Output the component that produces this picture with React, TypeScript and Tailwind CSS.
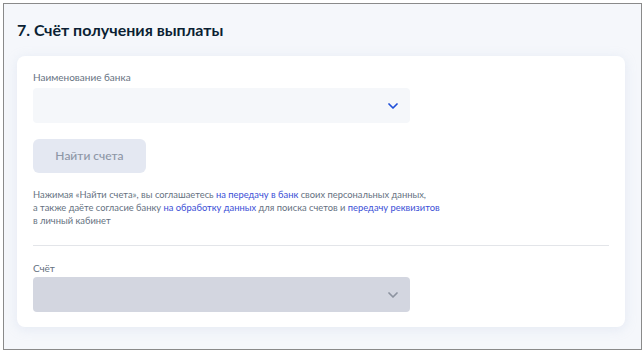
import React from 'react';

function Chevron({ color }: { color: string }) {
  return (
    <svg width="10" height="6" viewBox="0 0 10 6" fill="none">
      <path d="M1 1l4 4 4-4" stroke={color} strokeWidth="1.7" strokeLinecap="round" strokeLinejoin="round" />
    </svg>
  );
}

export default function App() {
  return (
    <div className="w-[644px] h-[352px] bg-white pt-[3px] pl-[3px]" style={{ fontFamily: 'Lato, "Noto Sans", sans-serif' }}>
      <div className="w-[639px] h-[347px] border border-[#8a8a8a] bg-[#f5f7fb] pl-[13px] pr-[16px] pt-[14px]">
        <h2 className="text-[16px] leading-[24px] font-bold text-[#0b1f33]">7. Счёт получения выплаты</h2>

        <div className="mt-[14px] bg-white rounded-[8px] px-[16px] pt-[14px] pb-[15px] shadow-[0_2px_12px_rgba(180,195,225,0.25)]">
          {/* Bank */}
          <label className="block text-[10px] leading-[14px] text-[#66727f] mb-[4px]">Наименование банка</label>
          <div className="w-[377px] h-[35px] rounded-[4px] bg-[#f5f7fa] flex items-center justify-end pr-[12px]">
            <Chevron color="#1f4fd8" />
          </div>

          <button className="mt-[16px] w-[113px] h-[34px] rounded-[6px] bg-[#e4e8f2] text-[12px] font-medium text-[#8d96a6]">
            Найти счета
          </button>

          <p className="mt-[15px] text-[9.35px] leading-[13px] text-[#66727f]">
            Нажимая «Найти счета», вы соглашаетесь <span className="text-[#3b4fd6]">на передачу в банк</span> своих персональных данных,
            <br />
            а также даёте согласие банку <span className="text-[#3b4fd6]">на обработку данных</span> для поиска счетов и{' '}
            <span className="text-[#3b4fd6]">передачу реквизитов</span>
            <br />
            в личный кабинет
          </p>

          <div className="mt-[18px] h-px bg-[#e3e5e9]" />

          {/* Account */}
          <label className="block mt-[15px] text-[10px] leading-[14px] text-[#66727f] mb-[2px]">Счёт</label>
          <div className="w-[377px] h-[35px] rounded-[4px] bg-[#d3d6e0] flex items-center justify-end pr-[12px]">
            <Chevron color="#8c93a0" />
          </div>
        </div>
      </div>
    </div>
  );
}
